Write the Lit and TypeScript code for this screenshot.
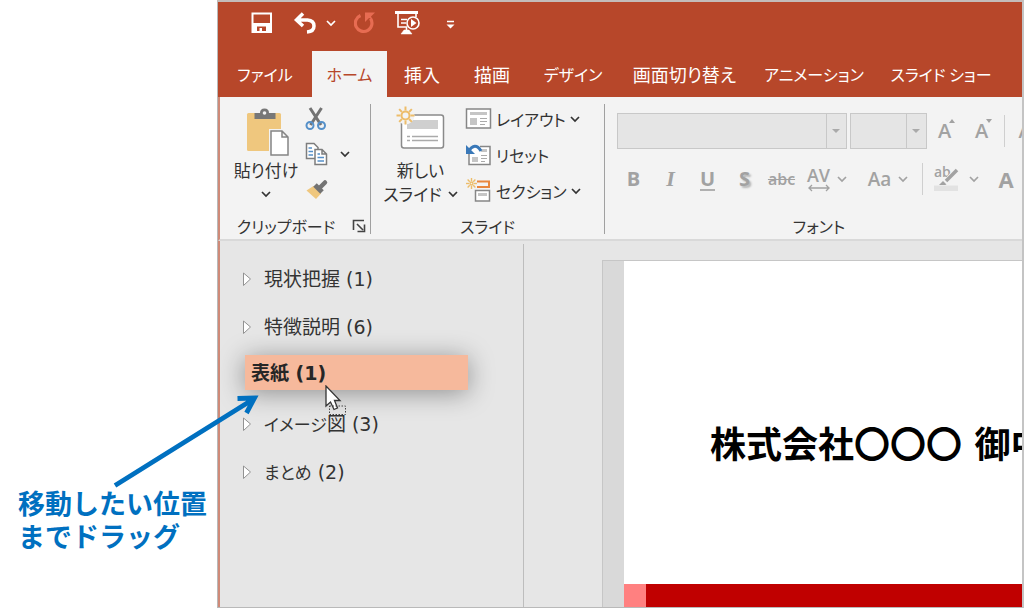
import { LitElement, html, css, svg } from "lit";
import { customElement } from "lit/decorators.js";

const chevron = () => html`<svg class="chev" width="10" height="8" viewBox="0 0 10 8" aria-hidden="true">
  <path d="M1 2 L5 6 L9 2" fill="none" stroke="currentColor" stroke-width="1.700" /></svg>`;

const sun = (cx: number, cy: number, inner: number, outer: number, w: number) => svg`
  <g stroke="#edbd6a" stroke-width=${w} fill="none">
    <circle cx=${cx} cy=${cy} r=${inner - 1} />
    ${[0, 45, 90, 135, 180, 225, 270, 315].map((a) => {
      const r = (a * Math.PI) / 180;
      return svg`<line x1=${cx + Math.cos(r) * inner} y1=${cy + Math.sin(r) * inner}
        x2=${cx + Math.cos(r) * outer} y2=${cy + Math.sin(r) * outer} />`;
    })}
  </g>`;

@customElement("ribbon-group")
class RibbonGroup extends LitElement {
  static properties = { label: {}, launcher: { type: Boolean } };
  declare label: string;
  declare launcher: boolean;
  static styles = css`
    :host { display: flex; flex-direction: column; box-sizing: border-box; padding-top: 3px; min-width: 0; }
    .content { flex: 1; }
    .foot { display: flex; align-items: center; height: 26px; color: #333; font-size: 16px; line-height: 26px; }
    .name { flex: 1; text-align: center; white-space: nowrap; }
    .launch { border: 0; background: none; padding: 0; margin-right: 4px; display: block; height: 14px; color: #444; }
    svg { display: block; }
  `;
  render() {
    return html`<div class="content"><slot></slot></div>
      <div class="foot"><span class="name">${this.label}</span>
        ${this.launcher
          ? html`<button class="launch" aria-label="${this.label}の設定"><svg width="14" height="14" viewBox="0 0 14 14">
              <path d="M1.500 11V1.500H12M5 5l6 6M12.500 5.500V12.500H5.500" fill="none" stroke="currentColor" stroke-width="1.600" /></svg></button>`
          : ""}
      </div>`;
  }
}

@customElement("section-list")
class SectionList extends LitElement {
  static styles = css`
    :host { display: block; padding: 14px 0 0 22px; box-sizing: border-box; }
    ul { list-style: none; margin: 0; padding: 0; font-family: "DejaVu Sans", "Noto Sans CJK JP", sans-serif; font-size: 19px; line-height: 24px; color: #333; }
    .row { display: flex; align-items: center; height: 48px; gap: 12px; }
    .kana { font-size: 17px; }
    .toggle { border: 0; padding: 0; background: none; height: 16px; }
    svg { display: block; }
    .drag { position: relative; height: 35px; margin: 4px 55px 10px 3px; padding-left: 6px; display: flex; align-items: center;
      background: #f6b99c; color: #262626; font-weight: 700; box-shadow: 0 3px 26px rgba(0, 0, 0, 0.38); }
    .cursor { position: absolute; left: 79px; top: 30px; z-index: 1; }
  `;
  render() {
    const row = (name: string, n: number) => html`<li class="row">
      <button class="toggle" aria-label="${name}を展開"><svg width="10" height="16" viewBox="0 0 10 16">
        <path d="M1.500 2L8.500 8L1.500 14.500Z" fill="#fff" stroke="#929292" /></svg></button>
      <span>${name.split(/([ぁ-ヿ]+)/).map((s) => (/[ぁ-ヿ]/.test(s) ? html`<span class="kana">${s}</span>` : s))} (${n})</span></li>`;
    return html`<ul>
      ${row("現状把握", 1)} ${row("特徴説明", 6)}
      <li class="drag"><span>表紙 (1)</span>
        <svg class="cursor" width="24" height="32" viewBox="0 0 24 32" aria-hidden="true">
          <path d="M2 1V21L6.500 17L10 24.500L13.500 23L10.500 15.500H16Z" fill="#fff" stroke="#333" stroke-width="1.300" />
          <rect x="5.500" y="21" width="16" height="8.500" fill="none" stroke="#444" stroke-dasharray="1.500 1.500" />
        </svg></li>
      ${row("イメージ図", 3)} ${row("まとめ", 2)}
    </ul>`;
  }
}

@customElement("app-root")
class AppRoot extends LitElement {
  static styles = css`
    :host { display: grid; grid-template-columns: 217px minmax(0, 1fr); height: 100vh; position: relative; overflow: hidden; background: #fff;
      font-family: "Noto Sans CJK JP", sans-serif; font-feature-settings: "palt"; font-size: 16px; color: #333; }
    button, select { font: inherit; font-feature-settings: inherit; color: inherit; border: 0; padding: 0; margin: 0; background: none; }
    svg { display: block; flex: none; }
    .note { align-self: end; margin: 0 0 56px 18px; color: #0070c0; font-size: 27px; line-height: 33px; font-weight: 700; font-feature-settings: normal; white-space: nowrap; }
    .arrow { position: absolute; left: 108px; top: 390px; z-index: 3; }

    .window { display: grid; grid-template-rows: auto auto minmax(0, 1fr); border: 1px solid #b9b9b9; border-top: 2px solid #c4bcb9; border-right: 2px solid #c4c4c4; overflow: hidden; }
    .head { background: #b7472a; color: #fff; }
    .quick { display: flex; align-items: center; gap: 18px; height: 41px; margin-bottom: 8px; padding-left: 32px; }
    .pair { display: flex; align-items: center; gap: 10px; }
    .quick .dim { color: #e76c52; }
    .tabs { display: grid; grid-template-columns: 94px 75px 70px 70px 92px 131px 128px 126px; height: 46px; }
    .tab { font-size: 16px; line-height: 46px; white-space: nowrap; text-align: center; color: #fff; }
    .tab.kanji { font-size: 18px; }
    .tab.on { background: #f3f3f3; color: #b7472a; }

    .ribbon { display: grid; grid-template-columns: 150px 1px 233px 1px minmax(428px, 1fr); height: 144px; background: #f3f3f3; border-left: 2px solid #cf8a78; border-bottom: 2px solid #d9d9d9; box-sizing: border-box; overflow: hidden; }
    .rule { background: #a0a0a0; margin: 7px 0 5px; }
    .big { display: flex; flex-direction: column; align-items: center; white-space: nowrap; line-height: 23px; font-size: 17px; gap: 1px; }
    .line { display: flex; align-items: center; gap: 6px; height: 23px; }
    .clip { display: grid; grid-template-columns: 76px 1fr; padding: 1px 0 0 8px; }
    .clip .big { padding-top: 6px; }
    .slides .big { padding-top: 4px; }
    .col { display: grid; grid-template-rows: repeat(3, 35px); align-content: start; align-items: center; justify-items: start; }
    .slides .col { grid-template-rows: repeat(3, 36px); }
    .col button { display: flex; align-items: center; gap: 4px; white-space: nowrap; }
    .copy { display: flex; align-items: center; gap: 10px; }
    .slides { display: grid; grid-template-columns: 83px 1fr; gap: 2px; padding: 1px 0 0 8px; }

    .fonts { padding: 13px 0 0 12px; color: #a2a2a2; font-family: "Open Sans", "Noto Sans", sans-serif; }
    .r1, .r2 { display: flex; align-items: center; }
    .r1 { height: 36px; gap: 3px; }
    .r2 { height: 34px; margin-top: 13px; margin-left: -2px; }
    .combo { display: flex; flex: none; width: 228px; height: 34px; border: 1px solid #c8c8c8; background: #e5e5e5; }
    .combo.size { width: 75px; }
    .combo select { appearance: none; flex: 1; min-width: 0; opacity: 1; }
    .combo svg { border-left: 1px solid #c8c8c8; }
    .sizer { display: flex; flex: none; width: 34px; height: 34px; justify-content: center; font-size: 20px; line-height: 34px; font-weight: 600; }
    .sizer svg { margin-left: -3px; margin-top: 4px; }
    .sep { flex: none; width: 1px; height: 32px; background: #cfcfcf; }
    .f { flex: none; width: 37px; text-align: center; font-size: 20px; line-height: 32px; font-weight: 700; }
    .i { font-family: "Liberation Serif", serif; font-style: italic; font-size: 22px; }
    .u span { border-bottom: 2px solid #b0b0b0; line-height: 20px; display: inline-block; }
    .s { text-shadow: 2px 2px 2px #b5b5b5; }
    .abc { font-size: 16px; text-decoration: line-through; font-weight: 600; }
    .av { font-size: 18px; line-height: 18px; font-weight: 600; }
    .av svg { margin: auto; }
    .aa { font-size: 19px; font-weight: 600; }
    .r2 .chev { margin-right: 14px; }
    .hl { width: 46px; }
    .hl svg { margin: auto; overflow: visible; }
    .ac { width: 26px; font-size: 22px; }

    .body { display: grid; grid-template-columns: 303px 1px minmax(0, 1fr); background: #e6e6e6; border-left: 2px solid #cf8a78; min-height: 0; }
    .divider { background: #bdbdbd; margin-top: 3px; }
    .canvas { margin: 19px 0 0 78px; border: 1px solid #c6c6c6; border-width: 1px 0 0 1px; background: #d9d9d9; padding-left: 21px; display: grid; min-height: 0; }
    .slide { background: #fff; display: grid; grid-template-rows: minmax(0, 1fr) 23px; overflow: hidden; }
    .slide h1 { margin: 0; padding: 46px 0 0 86px; align-self: center; font-family: "DejaVu Sans", "Noto Sans CJK JP", sans-serif; font-feature-settings: normal; font-size: 36px; line-height: 48px; font-weight: 700; color: #000; white-space: nowrap; }
    .band { background: #c00000; border-left: 22px solid #ff8080; }
  `;

  render() {
    const tabs = ["ファイル", "ホーム", "挿入", "描画", "デザイン", "画面切り替え", "アニメーション", "スライド ショー"];
    const comboArrow = html`<svg width="19" height="34" viewBox="0 0 19 34" aria-hidden="true"><path d="M5 15h8l-4 4z" fill="#aaa" /></svg>`;
    return html`
      <div class="note">移動したい位置<br />までドラッグ</div>
      <svg class="arrow" width="160" height="104" viewBox="108 390 160 104" aria-hidden="true">
        <path d="M115 485.500L252 400M237.500 398.500L254.500 398L246.500 413" fill="none" stroke="#0070c0" stroke-width="4.800" />
      </svg>
      <main class="window">
        <header class="head">
          <div class="quick">
            <button aria-label="上書き保存"><svg width="24" height="22" viewBox="250 12 24 22" fill="#fff">
              <path fill-rule="evenodd" d="M251.500 12.500H272V33H251.500ZM253.500 14.500V23H270V14.500ZM257 26.500V31H259.500V28H262V31H266V26.500Z" /></svg></button>
            <div class="pair">
              <button aria-label="元に戻す"><svg width="24" height="22" viewBox="292 12 24 22" fill="none" stroke="#fff" stroke-width="3.500">
                <path d="M303 13.500L296.500 20L303 26M297 20H307.500Q314 20.500 314 26Q314 31.500 307 32" /></svg></button>
              <button aria-label="元に戻す一覧">${chevron()}</button>
            </div>
            <button class="dim" aria-label="繰り返し"><svg width="22" height="22" viewBox="354 12 22 22" fill="none" stroke="currentColor" stroke-width="3.200">
              <path d="M360.500 15.500A8.300 8.300 0 1 0 370.500 18.500" /><path d="M365 12.500H375L371 16.500L372 19L369 18L365 22Z" fill="currentColor" stroke="none" /></svg></button>
            <button aria-label="先頭から開始"><svg width="26" height="26" viewBox="394 10 26 26" fill="none" stroke="#fff" stroke-width="1.600">
              <path d="M395 12.500H418" stroke-width="3" /><path d="M398 14V27H407M416 14V17M401 19.500H407M401 23H406M406.500 27V30" /><path d="M401 34L404 30H409L412 34Z" fill="#fff" stroke-width="0.500" />
              <circle cx="413" cy="23" r="6" /><path d="M411 19V27L416.500 23Z" fill="#fff" stroke="none" /></svg></button>
            <button aria-label="クイック アクセスのカスタマイズ"><svg width="24" height="20" viewBox="438 12 24 20"><path d="M447 20.500H454" stroke="#fff" stroke-width="1.500" /><path d="M446.500 23.500H454.500L450.500 27.500Z" fill="#fff" /></svg></button>
          </div>
          <nav class="tabs" role="tablist">
            ${tabs.map((t, i) => html`<button class="tab ${i === 1 ? "on" : ""} ${/[一-龠]/.test(t) ? "kanji" : ""}" role="tab" aria-selected=${i === 1}>${t}</button>`)}
          </nav>
        </header>

        <div class="ribbon">
          <ribbon-group label="クリップボード" launcher>
            <div class="clip">
              <button class="big">
                <svg width="46" height="50" viewBox="243 107 46 50">
                  <rect x="247" y="113" width="34" height="38" rx="1.500" fill="#efc77e" />
                  <path d="M254.500 119V113H260Q260 108.500 264.500 108.500Q269 108.500 269 113H275.500V119Z" fill="#777" />
                  <circle cx="264.500" cy="113" r="1.800" fill="#f3f3f3" />
                  <path d="M271 131H282L288 137V155H271Z" fill="#fff" stroke="#f3f3f3" stroke-width="4" />
                  <path d="M271 131H282L288 137V155H271ZM282 131V137H288" fill="#fff" stroke="#858585" stroke-width="1.500" />
                </svg>
                <span>貼り付け</span><span class="line">${chevron()}</span>
              </button>
              <div class="col">
                <button aria-label="切り取り"><svg width="26" height="26" viewBox="304 106 26 26" fill="none">
                  <path d="M310 108L321 125M321.500 108L310.500 125" stroke="#737373" stroke-width="3" />
                  <circle cx="310" cy="125.500" r="3.500" stroke="#5590c9" stroke-width="2" /><circle cx="321.500" cy="125.500" r="3.500" stroke="#5590c9" stroke-width="2" /></svg></button>
                <div class="copy">
                  <button aria-label="コピー"><svg width="26" height="26" viewBox="304 141 26 26" fill="#fff" stroke="#7d7d7d" stroke-width="1.500">
                    <path d="M306.500 143.500H314L318 147.500V158.500H306.500Z" /><path d="M308.500 148H312M308.500 151.500H313M308.500 155H313" stroke="#5590c9" />
                    <path d="M315 149.500H322L326.500 154V164.500H315ZM322 149.500V154H326.500" /><path d="M317.500 157.500H324M317.500 161H324M317.500 154H320" stroke="#5590c9" /></svg></button>
                  <button aria-label="コピーの種類">${chevron()}</button>
                </div>
                <button aria-label="書式のコピー"><svg width="26" height="26" viewBox="304 176 26 26">
                  <path d="M306.500 190.500L313.500 186L321 193.500L316 199Z" fill="#efc77e" /><path d="M315 185L322 192" stroke="#737373" stroke-width="5" /><path d="M319 188.500L325 182.500" stroke="#737373" stroke-width="4.500" stroke-linecap="round" /></svg></button>
              </div>
            </div>
          </ribbon-group>
          <div class="rule"></div>
          <ribbon-group label="スライド">
            <div class="slides">
              <button class="big">
                <svg width="50" height="52" viewBox="396 104 50 52">
                  <rect x="401.500" y="114" width="42" height="33" rx="2.500" fill="#fff" stroke="#8a8a8a" stroke-width="1.500" />
                  <path d="M407 119H438V128H407Z" fill="#cfcfcf" /><path d="M407 135.500H410M412 135.500H438M407 139.500H410M412 139.500H438" stroke="#aaa" stroke-width="1.500" />
                  <circle cx="405.500" cy="114.500" r="9" fill="#f3f3f3" />${sun(405.5, 114.5, 5, 9, 2)}
                </svg>
                <span>新しい</span><span class="line">スライド ${chevron()}</span>
              </button>
              <div class="col">
                <button><svg width="28" height="26" viewBox="464 106 28 26"><rect x="466.500" y="109" width="24" height="19" fill="#fff" stroke="#868686" stroke-width="1.500" />
                  <path d="M470 112H487V115H470ZM470 118H477V125H470Z" fill="#c5c5c5" /><path d="M480 118.500H487M480 121.500H487M480 124.500H485" stroke="#aaa" /></svg>
                  <span>レイアウト</span>${chevron()}</button>
                <button><svg width="28" height="26" viewBox="464 141 28 26"><path d="M469 149V163.500H490V145.500H480" fill="#fff" stroke="#868686" stroke-width="1.500" />
                  <path d="M472 156H478V161H472ZM481 148H487V151H481Z" fill="#c5c5c5" /><path d="M481 154.500H487M481 157.500H487M481 160.500H485" stroke="#aaa" />
                  <path d="M481 150Q475 140 468 151" fill="none" stroke="#3978b8" stroke-width="3" /><path d="M466 144V153H475Z" fill="#3978b8" /></svg>
                  <span>リセット</span></button>
                <button><svg width="28" height="28" viewBox="464 177 28 28"><path d="M477 181.500H489V187H477" fill="none" stroke="#e9873e" stroke-width="2" />
                  <rect x="475.500" y="190.500" width="14" height="10.500" fill="#fff" stroke="#868686" stroke-width="1.500" /><path d="M478 193H487V196H478Z" fill="#c5c5c5" />
                  ${sun(471.5, 183.5, 2.5, 5.5, 1.4)}</svg>
                  <span>セクション</span>${chevron()}</button>
              </div>
            </div>
          </ribbon-group>
          <div class="rule"></div>
          <ribbon-group label="フォント">
            <div class="fonts">
              <div class="r1">
                <div class="combo"><select aria-label="フォント名" disabled></select>${comboArrow}</div>
                <div class="combo size"><select aria-label="フォント サイズ" disabled></select>${comboArrow}</div>
                <button class="sizer" aria-label="フォント サイズの拡大">A<svg width="8" height="6" viewBox="0 0 8 6"><path d="M1 5h6l-3-4z" fill="#a2a2a2" /></svg></button>
                <button class="sizer" aria-label="フォント サイズの縮小">A<svg width="8" height="6" viewBox="0 0 8 6"><path d="M1 1h6l-3 4z" fill="#a2a2a2" /></svg></button>
                <span class="sep"></span>
                <button class="sizer" aria-label="書式のクリア">A</button>
              </div>
              <div class="r2">
                <button class="f" aria-label="太字">B</button>
                <button class="f i" aria-label="斜体">I</button>
                <button class="f u" aria-label="下線"><span>U</span></button>
                <button class="f s" aria-label="影">S</button>
                <button class="f abc" aria-label="取り消し線">abc</button>
                <button class="f av" aria-label="文字の間隔">AV<svg width="24" height="8" viewBox="0 0 24 8"><path d="M1.500 4H22.500M5 1L2 4L5 7M19 1L22 4L19 7" fill="none" stroke="#a2a2a2" stroke-width="1.300" /></svg></button>
                ${chevron()}
                <button class="f aa" aria-label="文字種の変換">Aa</button>
                ${chevron()}
                <span class="sep"></span>
                <button class="f hl" aria-label="蛍光ペンの色"><svg width="38" height="32" viewBox="927 163 38 32"><text x="934" y="177" font-size="14" fill="#a2a2a2" font-weight="600">ab</text>
                  <path d="M947 181L957 170" stroke="#f3f3f3" stroke-width="6" /><path d="M946 181L957 170" stroke="#a2a2a2" stroke-width="3.500" /><path d="M939 185L943 181L946.500 184.500L945 185Z" fill="#a2a2a2" /><path d="M934 185.500H958V191H934Z" fill="#e2e2e2" /></svg></button>
                ${chevron()}
                <button class="f ac" aria-label="フォントの色">A</button>
              </div>
            </div>
          </ribbon-group>
        </div>

        <div class="body">
          <section-list></section-list>
          <div class="divider"></div>
          <div class="canvas"><article class="slide"><h1>株式会社〇〇〇 御中</h1><div class="band"></div></article></div>
        </div>
      </main>`;
  }
}
